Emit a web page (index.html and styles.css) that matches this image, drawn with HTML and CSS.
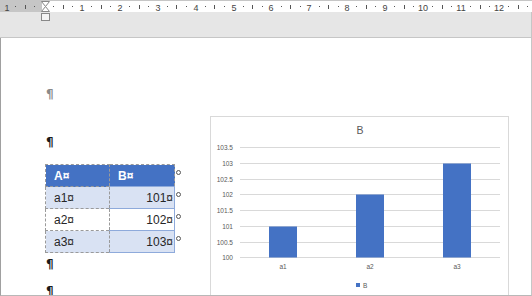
FILE: index.html
```html
<!DOCTYPE html>
<html lang="en">
<head>
<meta charset="utf-8"/>
<link rel="stylesheet" href="styles.css">
</head>
<body>
<div id="ruler">
    <svg width="532" height="11" viewBox="0 0 532 11">
        <rect x="0" y="0" width="42" height="11" fill="#c6c6c6"/>
        <rect x="42" y="0" width="490" height="11" fill="#fff"/>
        <path fill="#555" d="M15 5h1v1h-1z M34 5h1v1h-1z M53 5h1v1h-1z M72 5h1v1h-1z M91 5h1v1h-1z M110 5h1v1h-1z M129 5h1v1h-1z M148 5h1v1h-1z M167 5h1v1h-1z M186 5h1v1h-1z M205 5h1v1h-1z M224 5h1v1h-1z M243 5h1v1h-1z M262 5h1v1h-1z M281 5h1v1h-1z M300 5h1v1h-1z M319 5h1v1h-1z M338 5h1v1h-1z M356 5h1v1h-1z M375 5h1v1h-1z M394 5h1v1h-1z M413 5h1v1h-1z M432 5h1v1h-1z M451 5h1v1h-1z M470 5h1v1h-1z M489 5h1v1h-1z M508 5h1v1h-1z M527 5h1v1h-1z"/>
        <path fill="#555" d="M25 4h1v4h-1z M63 4h1v4h-1z M101 4h1v4h-1z M139 4h1v4h-1z M176 4h1v4h-1z M214 4h1v4h-1z M252 4h1v4h-1z M290 4h1v4h-1z M328 4h1v4h-1z M366 4h1v4h-1z M404 4h1v4h-1z M442 4h1v4h-1z M480 4h1v4h-1z M518 4h1v4h-1z"/>
        <g class="ruler-num" text-anchor="middle">
            <text x="7" y="9.5">1</text>
            <text x="82" y="9.5">1</text>
            <text x="120" y="9.5">2</text>
            <text x="158" y="9.5">3</text>
            <text x="196" y="9.5">4</text>
            <text x="234" y="9.5">5</text>
            <text x="271" y="9.5">6</text>
            <text x="309" y="9.5">7</text>
            <text x="347" y="9.5">8</text>
            <text x="385" y="9.5">9</text>
            <text x="423" y="9.5">10</text>
            <text x="461" y="9.5">11</text>
            <text x="499" y="9.5">12</text>
        </g>
    </svg>
</div>
<svg id="indent" width="10" height="21" viewBox="0 0 10 21">
    <path d="M0.5 0.5 L8.5 0.5 L4.5 5.5 Z" fill="#fff" stroke="#888"/>
    <path d="M4.5 5.5 L8.5 10.5 L0.5 10.5 Z" fill="#fff" stroke="#888"/>
    <rect x="0.5" y="12.5" width="8" height="7" fill="#f4f4f4" stroke="#888"/>
</svg>
<div id="band"></div>
<div id="page">
    <div class="textcol">
        <p class="mark faint">¶</p>
        <p class="mark second">¶</p>
        <table class="grid">
            <colgroup><col class="ca"><col class="cb"><col class="ce"></colgroup>
            <tr class="head">
                <td>A¤</td><td class="b">B¤</td><td class="eor"><span class="ring"></span></td>
            </tr>
            <tr class="band1">
                <td>a1¤</td><td class="b num">101¤</td><td class="eor"><span class="ring"></span></td>
            </tr>
            <tr>
                <td>a2¤</td><td class="b num">102¤</td><td class="eor"><span class="ring"></span></td>
            </tr>
            <tr class="band1">
                <td>a3¤</td><td class="b num">103¤</td><td class="eor"><span class="ring"></span></td>
            </tr>
        </table>
        <p class="mark after">¶</p>
        <p class="mark last">¶</p>
    </div>
    <div class="chart">
        <svg width="300" height="190" viewBox="0 0 300 190">
            <rect x="0.5" y="0.5" width="298" height="188" fill="#fff" stroke="#d9d9d9"/>
            <text class="title" x="150" y="18" text-anchor="middle">B</text>
            <g stroke="#d9d9d9" stroke-width="1">
                <line x1="30" x2="290" y1="31.5" y2="31.5"/>
                <line x1="30" x2="290" y1="47.5" y2="47.5"/>
                <line x1="30" x2="290" y1="63.5" y2="63.5"/>
                <line x1="30" x2="290" y1="78.5" y2="78.5"/>
                <line x1="30" x2="290" y1="94.5" y2="94.5"/>
                <line x1="30" x2="290" y1="110.5" y2="110.5"/>
                <line x1="30" x2="290" y1="126.5" y2="126.5"/>
                <line x1="30" x2="290" y1="141.5" y2="141.5"/>
            </g>
            <g class="axis" text-anchor="end">
                <text x="23" y="34">103.5</text>
                <text x="23" y="50">103</text>
                <text x="23" y="66">102.5</text>
                <text x="23" y="81">102</text>
                <text x="23" y="97">101.5</text>
                <text x="23" y="113">101</text>
                <text x="23" y="129">100.5</text>
                <text x="23" y="144">100</text>
            </g>
            <g fill="#4472c4">
                <rect x="59" y="110.5" width="28" height="31"/>
                <rect x="146" y="78.5" width="28" height="63"/>
                <rect x="233" y="47.5" width="28" height="94"/>
            </g>
            <g class="axis" text-anchor="middle">
                <text x="73" y="153">a1</text>
                <text x="160" y="153">a2</text>
                <text x="247" y="153">a3</text>
            </g>
            <rect x="146" y="167" width="4" height="4" fill="#4472c4"/>
            <text class="axis" x="153" y="171.5">B</text>
        </svg>
    </div>
</div>
</body>
</html>
```

FILE: styles.css
```css
html {
    font-family: "Liberation Sans", Arial, sans-serif;
    margin:0;
    padding:0;
}
body {
    margin:0;
    padding:0;
    width:532px;
    height:296px;
    overflow:hidden;
    position:relative;
    background:#fff;
}
#ruler {
    height:11px;
    border-top:1px solid #c6c6c6;
}
#ruler svg {
    display:block;
}
.ruler-num {
    font-size:9px;
    fill:#444;
}
#indent {
    position:absolute;
    left:41px;
    top:1px;
}
#band {
    height:25px;
    background:#e6e6e6;
    border-bottom:1px solid #c6c6c6;
    border-right:1px solid #c6c6c6;
}
#page {
    display:flex;
    align-items:flex-start;
    height:257px;
    padding-left:44px;
    border-left:1px solid #a0a0a0;
    border-right:1px solid #c6c6c6;
    border-bottom:1px solid #b8b8b8;
    overflow:hidden;
}
.textcol {
    width:165px;
    flex:none;
}
.mark {
    margin:0;
    padding-left:1px;
    font-family: "DejaVu Sans", sans-serif;
    font-size:12px;
    font-weight:bold;
    line-height:14px;
    color:#1a1a1a;
}
.mark.faint {
    margin-top:49px;
    color:#8a8a8a;
}
.mark.second {
    margin-top:34px;
}
.mark.after {
    margin-top:4px;
}
.mark.last {
    margin-top:13px;
}
.grid {
    border-collapse:collapse;
    table-layout:fixed;
    margin-top:15px;
    font-size:12px;
    line-height:14px;
    color:#262626;
}
.grid col.ca {
    width:64px;
}
.grid col.cb {
    width:65px;
}
.grid col.ce {
    width:9px;
}
.grid td {
    height:22px;
    box-sizing:border-box;
    padding:0 0 0 8px;
    border:1px dashed #9a9a9a;
    white-space:nowrap;
}
.grid td.b {
    padding-left:8px;
}
.grid td.num {
    text-align:right;
    padding:0 1px 0 0;
    border:1px solid #8eaadb;
    border-left:none;
}
.grid tr.head td {
    background:#4472c4;
    color:#fff;
    font-weight:bold;
    border-color:#9a9a9a;
}
.grid tr.band1 td {
    background:#d9e2f3;
}
.grid td.eor,
.grid tr.head td.eor,
.grid tr.band1 td.eor {
    background:none;
    border:none;
    padding:5px 0 0 1px;
    vertical-align:top;
}
.ring {
    display:block;
    width:3px;
    height:3px;
    border:1px solid #555;
    border-radius:50%;
}
.chart {
    margin-top:78px;
    flex:none;
}
.chart svg {
    display:block;
}
.chart .title {
    font-size:10.5px;
    fill:#595959;
}
.chart .axis {
    font-size:6.5px;
    fill:#595959;
}
```
